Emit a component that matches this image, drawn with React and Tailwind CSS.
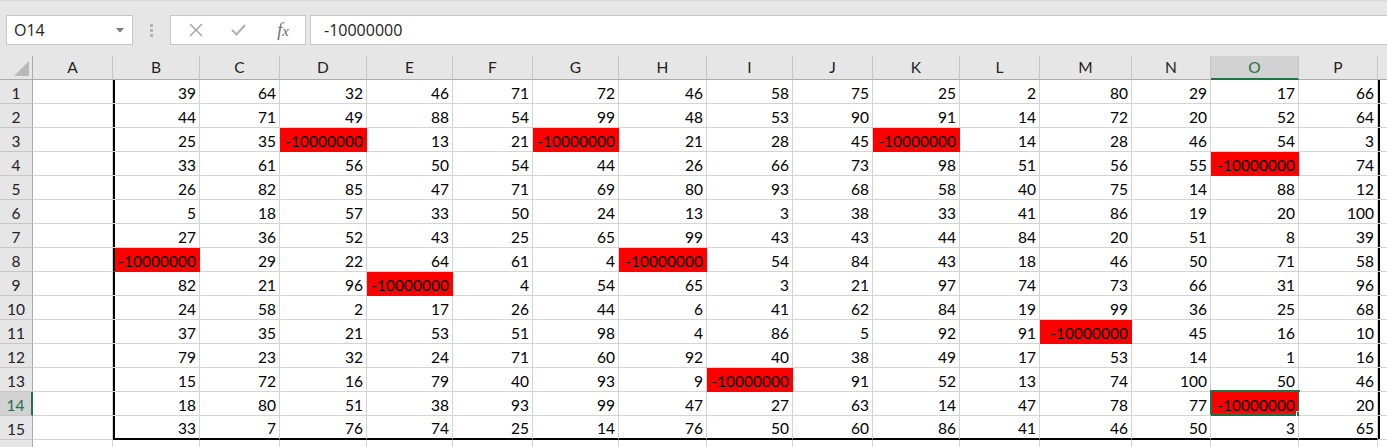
import React from "react";

const letters = ["", "A", "B", "C", "D", "E", "F", "G", "H", "I", "J", "K", "L", "M", "N", "O", "P", "Q"];

// "R" = red cell holding -10000000
const rows = [
  [39, 64, 32, 46, 71, 72, 46, 58, 75, 25, 2, 80, 29, 17, 66],
  [44, 71, 49, 88, 54, 99, 48, 53, 90, 91, 14, 72, 20, 52, 64],
  [25, 35, "R", 13, 21, "R", 21, 28, 45, "R", 14, 28, 46, 54, 3],
  [33, 61, 56, 50, 54, 44, 26, 66, 73, 98, 51, 56, 55, "R", 74],
  [26, 82, 85, 47, 71, 69, 80, 93, 68, 58, 40, 75, 14, 88, 12],
  [5, 18, 57, 33, 50, 24, 13, 3, 38, 33, 41, 86, 19, 20, 100],
  [27, 36, 52, 43, 25, 65, 99, 43, 43, 44, 84, 20, 51, 8, 39],
  ["R", 29, 22, 64, 61, 4, "R", 54, 84, 43, 18, 46, 50, 71, 58],
  [82, 21, 96, "R", 4, 54, 65, 3, 21, 97, 74, 73, 66, 31, 96],
  [24, 58, 2, 17, 26, 44, 6, 41, 62, 84, 19, 99, 36, 25, 68],
  [37, 35, 21, 53, 51, 98, 4, 86, 5, 92, 91, "R", 45, 16, 10],
  [79, 23, 32, 24, 71, 60, 92, 40, 38, 49, 17, 53, 14, 1, 16],
  [15, 72, 16, 79, 40, 93, 9, "R", 91, 52, 13, 74, 100, 50, 46],
  [18, 80, 51, 38, 93, 99, 47, 27, 63, 14, 47, 78, 77, "R", 20],
  [33, 7, 76, 74, 25, 14, 76, 50, 60, 86, 41, 46, 50, 3, 65],
  [],
];

const SEL_ROW = 14;
const SEL_COL = 15; // O

function FormulaBar() {
  return (
    <div className="h-[56px] pt-[14px] pl-[6px] flex items-start border-t border-[#d8d8d8]">
      <div className="w-[127px] h-[30px] bg-white border border-[#c6c6c6] flex items-center pl-[7px] pr-[8px]">
        <span className="font-['Open_Sans',sans-serif] text-[16px] text-[#222] flex-1">O14</span>
        <svg width="8" height="5" viewBox="0 0 8 5">
          <path d="M0 0 L8 0 L4 4.5 Z" fill="#7a7a7a" />
        </svg>
      </div>
      <div className="w-[37px] h-[30px] flex flex-col items-center justify-center gap-[2px]">
        <div className="w-[3px] h-[3px] bg-[#b4b4b4]" />
        <div className="w-[3px] h-[3px] bg-[#b4b4b4]" />
        <div className="w-[3px] h-[3px] bg-[#b4b4b4]" />
      </div>
      <div className="w-[136px] h-[30px] bg-white border border-[#c6c6c6] flex items-center">
        <div className="w-[45px] flex justify-center pl-[4px]">
          <svg width="14" height="14" viewBox="0 0 14 14">
            <path d="M1 1 L13 13 M13 1 L1 13" stroke="#a6a6a6" strokeWidth="1.5" fill="none" />
          </svg>
        </div>
        <div className="w-[45px] flex justify-center">
          <svg width="15" height="12" viewBox="0 0 15 12">
            <path d="M1 6 L5.5 10.5 L14 1" stroke="#b0b0b0" strokeWidth="2" fill="none" />
          </svg>
        </div>
        <div className="w-[44px] flex justify-center">
          <span className="font-['Liberation_Serif',serif] italic text-[18px] text-[#6e6e6e] leading-none">
            f<span className="text-[15px]">x</span>
          </span>
        </div>
      </div>
      <div className="ml-[4px] flex-1 h-[30px] bg-white border border-r-0 border-[#c6c6c6] flex items-center pl-[13px]">
        <span className="font-['Open_Sans',sans-serif] text-[16px] text-[#222]">-10000000</span>
      </div>
    </div>
  );
}

function HeaderRow() {
  return (
    <>
      <div className="h-[24px] border-r border-b border-[#ababab] flex items-end justify-end pr-[3px] pb-[3px]">
        <svg width="15" height="15" viewBox="0 0 15 15">
          <path d="M15 0 L15 15 L0 15 Z" fill="#b9b9b9" />
        </svg>
      </div>
      {letters.slice(1).map((l, i) => {
        const c = i + 1;
        const sel = c === SEL_COL;
        return (
          <div
            key={l}
            className={
              sel
                ? "h-[24px] bg-[#d2d2d2] border-r border-[#c6c6c6] border-b-2 border-b-[#217346] flex items-end justify-center pb-[3px] text-[#217346]"
                : "h-[24px] border-r border-[#c6c6c6] border-b border-b-[#ababab] flex items-end justify-center pb-[4px] text-[#222]"
            }
          >
            <span className="leading-none">{c === 17 ? "" : l}</span>
          </div>
        );
      })}
    </>
  );
}

function cellClass(r, c, red) {
  let cls = "h-[24px] flex items-end justify-end pr-[3px] pb-[2px] whitespace-nowrap overflow-visible relative border-r ";
  cls += red ? "bg-[#ff0000] border-[#ff0000] " : "bg-white border-[#d4d4d4] ";
  if (r === 15 && c >= 2 && c <= 16) cls += "border-b-2 border-b-black ";
  else cls += "border-b ";
  if ((c === 2 || c === 17) && r <= 15) cls += "shadow-[inset_2px_0_0_#000] ";
  return cls;
}

function DataRow({ r, vals }) {
  const sel = r === SEL_ROW;
  return (
    <>
      <div
        className={
          sel
            ? "h-[24px] bg-[#d2d2d2] border-b border-[#c6c6c6] border-r-2 border-r-[#217346] flex items-end justify-center pb-[2px] text-[#217346]"
            : "h-[24px] bg-[#e6e6e6] border-b border-[#c6c6c6] border-r border-r-[#ababab] flex items-end justify-center pb-[2px] text-[#222]"
        }
      >
        <span className="leading-none">{r <= 15 ? r : ""}</span>
      </div>
      {letters.slice(1).map((l, i) => {
        const c = i + 1;
        const v = c >= 2 && c <= 16 ? vals[c - 2] : undefined;
        const red = v === "R";
        const isSel = r === SEL_ROW && c === SEL_COL;
        return (
          <div key={l} className={cellClass(r, c, red)}>
            <span className="leading-none text-black">{red ? "-10000000" : v}</span>
            {isSel && (
              <>
                <div className="absolute left-[-1px] top-[-2px] right-[-2px] bottom-0 border-2 border-[#217346]" />
                <div className="absolute right-[-5px] bottom-[-3px] w-[7px] h-[7px] bg-[#217346] border border-white" />
              </>
            )}
          </div>
        );
      })}
    </>
  );
}

export default function App() {
  return (
    <div className="w-[1387px] h-[447px] overflow-hidden bg-[#e6e6e6]">
      <FormulaBar />
      <div className="grid grid-cols-[33px_80px_87px_80px_87px_86px_80px_86px_88px_86px_80px_87px_80px_92px_79px_88px_79px_80px] font-['Lato','Liberation_Sans',sans-serif] text-[15.5px]">
        <HeaderRow />
        {rows.map((vals, i) => (
          <DataRow key={i} r={i + 1} vals={vals} />
        ))}
      </div>
    </div>
  );
}
